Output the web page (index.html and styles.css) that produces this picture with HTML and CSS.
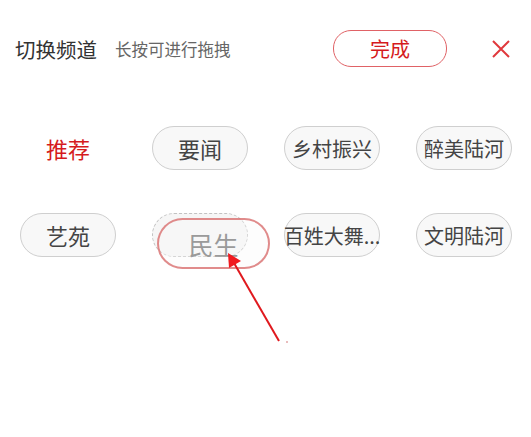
FILE: index.html
```html
<!DOCTYPE html>
<html lang="zh-CN">
<head>
    <meta charset="UTF-8">
    <meta name="viewport" content="width=device-width, initial-scale=1.0">
    <title>切换频道</title>
    <link rel="stylesheet" href="styles.css">
</head>
<body class="page">
    <!-- top bar -->
    <div class="topBar">
        <span class="title">切换频道</span>
        <span class="hint">长按可进行拖拽</span>
        <span class="doneBtn">完成</span>
        <span class="closeBtn">
            <svg width="20" height="18" viewBox="0 0 20 18">
                <path d="M2 1 L18 17 M18 1 L2 17" stroke="#e0383c" stroke-width="2" fill="none"/>
            </svg>
        </span>
    </div>

    <!-- channel grid -->
    <div class="channelGrid">
        <div class="chip current">推荐</div>
        <div class="chip">要闻</div>
        <div class="chip long">乡村振兴</div>
        <div class="chip long">醉美陆河</div>

        <div class="chip">艺苑</div>
        <div class="chip placeholder">
            <div class="dragChip">民生</div>
        </div>
        <div class="chip long">百姓大舞...</div>
        <div class="chip long">文明陆河</div>
    </div>

    <!-- annotation arrow -->
    <svg class="arrow" width="531" height="437" viewBox="0 0 531 437">
        <line x1="279" y1="341" x2="234" y2="263" stroke="#e0191e" stroke-width="2"/>
        <polygon points="228,253 241,261 229,268" fill="#f01a1f"/>
        <circle cx="287" cy="342" r="0.8" fill="#c66"/>
    </svg>
</body>
</html>
```

FILE: styles.css
```css
body {
    margin: 0;
}

.page {
    background-color: #fff;
    font-family: "Noto Sans CJK SC", "Noto Sans", sans-serif;
    position: relative;
    width: 531px;
    height: 437px;
    overflow: hidden;
}

.topBar {
    display: flex;
    align-items: center;
    height: 97px;
    padding: 0 20px 0 15px;
}

.title {
    font-size: 20.5px;
    color: #333;
}

.hint {
    font-size: 16.5px;
    color: #666;
    margin-left: 18px;
}

.doneBtn {
    margin-left: auto;
    width: 112px;
    height: 35px;
    border: 1px solid #e06266;
    border-radius: 18px;
    display: flex;
    align-items: center;
    justify-content: center;
    font-size: 20px;
    color: #d51a20;
}

.closeBtn {
    display: flex;
    margin-left: 44px;
}

.channelGrid {
    display: grid;
    grid-template-columns: repeat(4, 96px);
    justify-content: space-between;
    row-gap: 43px;
    padding: 29px 19px 0 20px;
}

.chip {
    height: 44px;
    box-sizing: border-box;
    border: 1px solid #cfcfcf;
    border-radius: 22px;
    background-color: #f8f8f8;
    display: flex;
    align-items: center;
    justify-content: center;
    font-size: 22px;
    color: #444;
    white-space: nowrap;
}

.chip.long {
    font-size: 20px;
}

.chip.current {
    border: none;
    background-color: transparent;
    color: #d51a20;
}

.chip.placeholder {
    position: relative;
    border: 1px dashed #c2c2c2;
    background-color: #f6f6f6;
}

.dragChip {
    position: absolute;
    left: 4px;
    top: 4px;
    width: 113px;
    height: 51px;
    box-sizing: border-box;
    border: 2px solid rgba(214, 100, 100, 0.75);
    border-radius: 26px;
    background-color: rgba(250, 250, 250, 0.35);
    display: flex;
    align-items: center;
    justify-content: center;
    font-size: 25px;
    color: #9a9a9a;
}

.arrow {
    position: absolute;
    left: 0;
    top: 0;
    pointer-events: none;
}
```
